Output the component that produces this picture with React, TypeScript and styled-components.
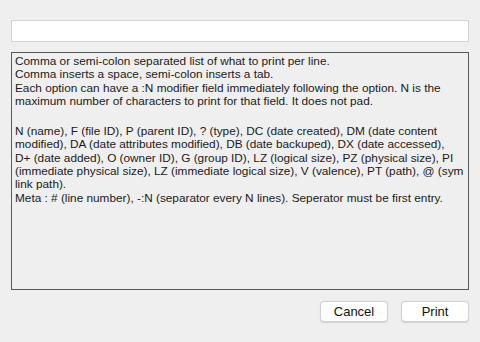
import React from "react";
import styled, { createGlobalStyle } from "styled-components";

const Global = createGlobalStyle`
  html, body {
    margin: 0;
    padding: 0;
    background: #efefef;
  }
  body {
    font-family: "Liberation Sans", Arial, sans-serif;
    color: #1a1a1a;
  }
`;

const Dialog = styled.div`
  width: 480px;
  height: 342px;
  box-sizing: border-box;
  padding: 20px 11px 0 11px;
  display: flex;
  flex-direction: column;
  background: #efefef;
`;

const Field = styled.input`
  box-sizing: border-box;
  width: 458px;
  height: 22px;
  margin: 0;
  border: 1px solid #d4d4d4;
  background: #ffffff;
  outline: none;
  font-family: inherit;
  font-size: 12px;
`;

const HelpBox = styled.div`
  box-sizing: border-box;
  margin-top: 10px;
  width: 458px;
  height: 238px;
  border: 1px solid #5a5a5a;
  padding: 2px 3px;
  font-size: 11.8px;
  line-height: 13.3px;
  white-space: nowrap;
  color: #1a1a1a;
`;

const Para = styled.p<{ $gap?: number }>`
  margin: 0;
  margin-top: ${(p) => p.$gap ?? 0}px;
`;

const Footer = styled.div`
  display: flex;
  justify-content: flex-end;
  gap: 13px;
  margin-top: 11px;
`;

const Button = styled.button`
  box-sizing: border-box;
  width: 68px;
  height: 21px;
  padding: 0;
  border: 1px solid #d2d2d2;
  border-radius: 4px;
  background: #ffffff;
  box-shadow: 0 0.5px 1px rgba(0, 0, 0, 0.12);
  font-family: "Liberation Sans", Arial, sans-serif;
  font-size: 13px;
  color: #111111;
`;

export default function App() {
  return (
    <>
      <Global />
      <Dialog>
        <Field type="text" />
        <HelpBox>
          <Para>
            Comma or semi-colon separated list of what to print per line.
            <br />
            Comma inserts a space, semi-colon inserts a tab.
            <br />
            Each option can have a :N modifier field immediately following the option. N is the
            <br />
            maximum number of characters to print for that field. It does not pad.
          </Para>
          <Para $gap={17}>
            N (name), F (file ID), P (parent ID), ? (type), DC (date created), DM (date content
            <br />
            modified), DA (date attributes modified), DB (date backuped), DX (date accessed),
            <br />
            D+ (date added), O (owner ID), G (group ID), LZ (logical size), PZ (physical size), PI
            <br />
            (immediate physical size), LZ (immediate logical size), V (valence), PT (path), @ (sym
            <br />
            link path).
            <br />
            Meta : # (line number), -:N (separator every N lines). Seperator must be first entry.
          </Para>
        </HelpBox>
        <Footer>
          <Button>Cancel</Button>
          <Button>Print</Button>
        </Footer>
      </Dialog>
    </>
  );
}
